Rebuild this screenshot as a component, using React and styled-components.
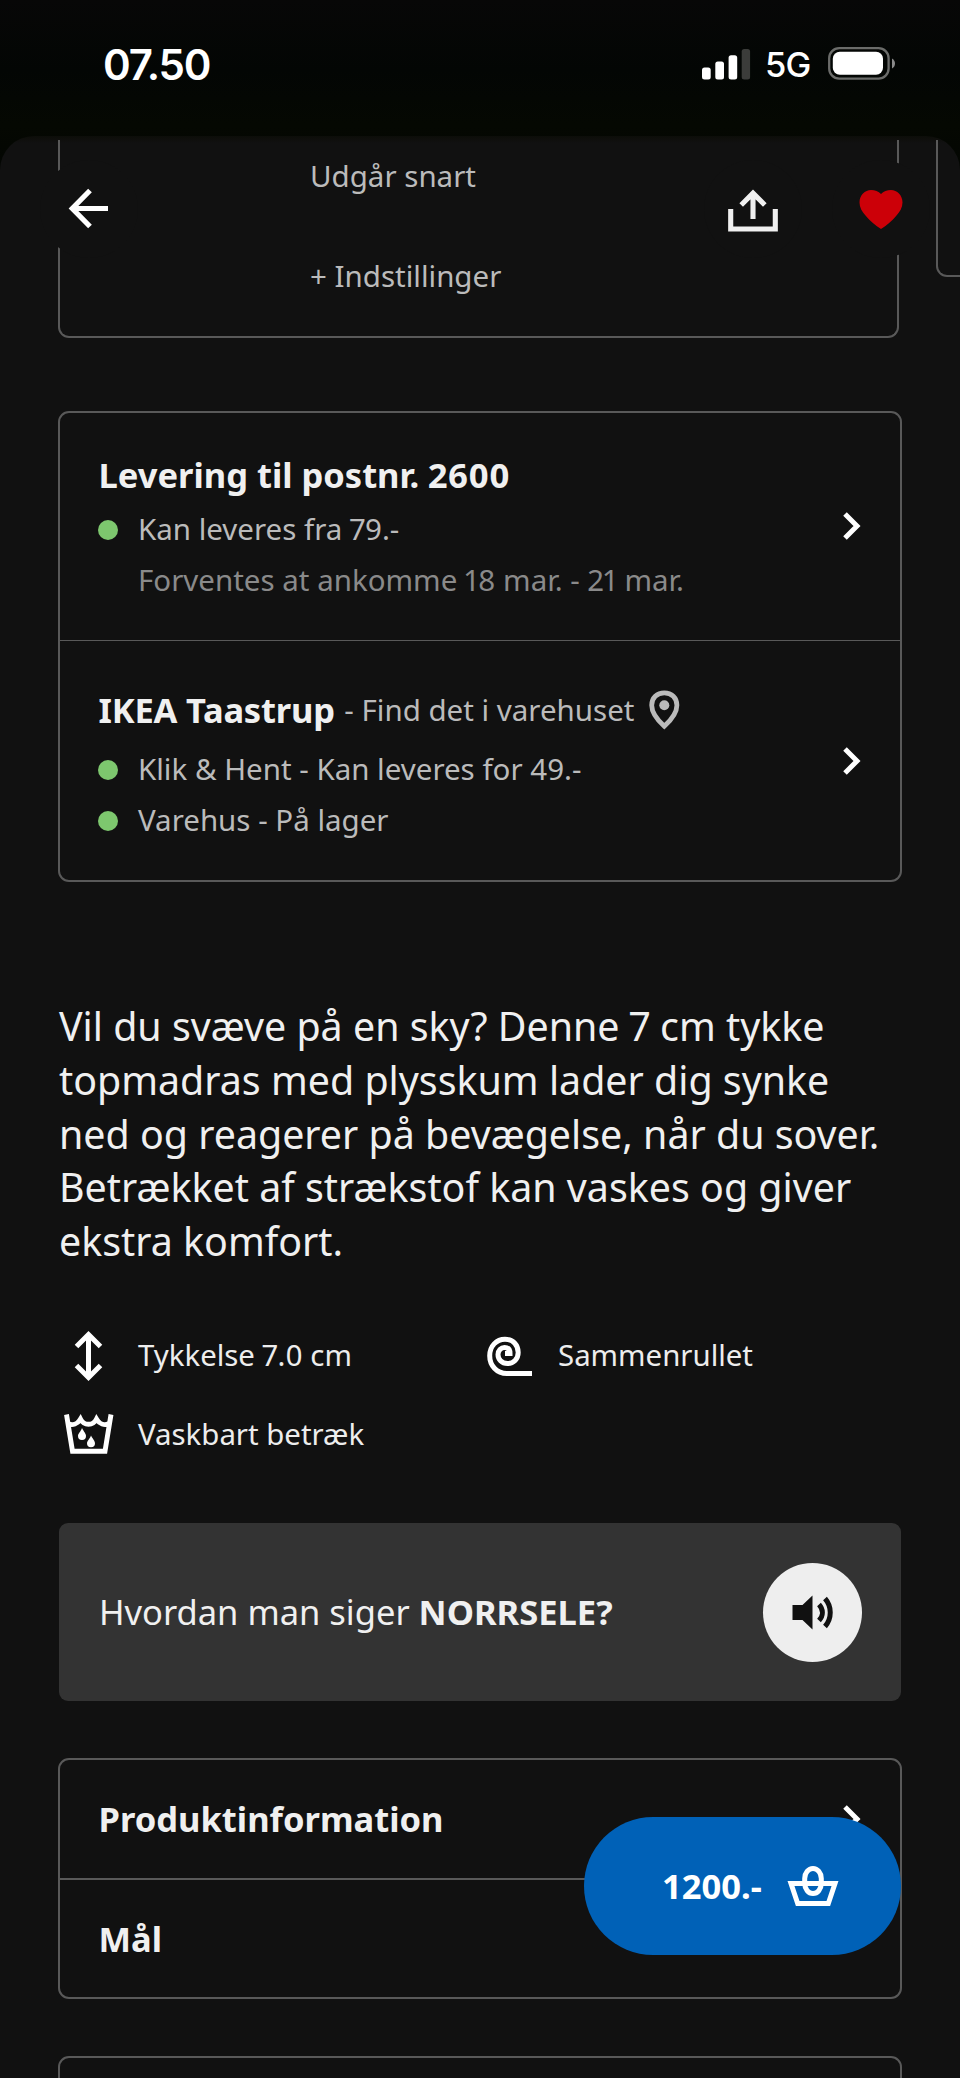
import styled, { createGlobalStyle, css } from "styled-components";

const GlobalStyle = createGlobalStyle`
  * {
    box-sizing: border-box;
  }
  body {
    margin: 0;
    background-color: #111111;
    font-family: "Noto Sans", sans-serif;
    font-variant-numeric: proportional-nums;
    color: #f0f0f0;
  }
  svg {
    display: block;
    flex-shrink: 0;
  }
`;

const Screen = styled.div`
  width: 960px;
  height: 2078px;
  overflow: hidden;
  position: relative;
  background: linear-gradient(#070707 0, #030604 70px, #050802 125px, #030602 170px);
`;

const StatusBar = styled.header`
  height: 136px;
  padding: 0 65px 7px 103px;
  display: flex;
  align-items: center;
  justify-content: space-between;
  font-family: Inter, sans-serif;
  color: #ffffff;
`;

const Clock = styled.span`
  font-size: 42px;
  font-weight: 600;
  letter-spacing: -1.1px;
`;

const StatusIcons = styled.div`
  display: flex;
  align-items: center;
  padding-bottom: 2px;
`;

const Network = styled.span`
  width: 77px;
  padding-left: 14px;
  font-size: 34.5px;
  font-weight: 500;
  letter-spacing: -0.8px;
  padding-top: 1px;
`;

const Sheet = styled.main`
  height: 1942px;
  border-radius: 34px 34px 0 0;
  overflow: hidden;
  background: linear-gradient(#0c0d09 0, #0f0f0c 3px, #111111 7px);
  padding-top: 4px;
`;

const RoundButton = styled.button`
  width: 98px;
  height: 98px;
  padding: 0;
  border: 0;
  border-radius: 50%;
  background-color: #111111;
  display: flex;
  align-items: center;
  justify-content: center;
`;

/* floats on top of the scrolled page */
const NavBar = styled.nav`
  position: absolute;
  top: 160px;
  left: 40px;
  right: 30px;
  display: flex;
  justify-content: space-between;
`;

const NavButton = styled(RoundButton)`
  padding: 0 1px 2px 0;
`;

const NavActions = styled.div`
  display: flex;
  gap: 30px;
`;

const Variants = styled.section`
  display: flex;
  align-items: flex-start;
  gap: 37px;
  padding-left: 58px;
`;

const VariantCard = styled.div`
  flex: none;
  width: 841px;
  height: ${({ $height }) => $height}px;
  border: 2px solid #595959;
  border-top: 0;
  border-radius: 0 0 11px 11px;
  padding: 14px 0 0 250px;
  display: flex;
  flex-direction: column;
  gap: 56px;
`;

const Body = styled.p`
  margin: 0;
  font-size: 29.5px;
  line-height: ${({ $line }) => $line || 51}px;
  color: ${({ $dim }) => ($dim ? "#8a8a8a" : "#bbbbbb")};
  white-space: nowrap;
`;

const Card = styled.section`
  width: 844px;
  margin: ${({ $top }) => $top}px 0 0 58px;
  border: 2px solid #595959;
  border-radius: 11px;
`;

const Row = styled.div`
  height: ${({ $height }) => $height}px;
  padding: ${({ $padTop }) => $padTop || 0}px 39px 0 38.5px;
  display: grid;
  grid-template-columns: 1fr 18px;
  ${({ $divider }) =>
    $divider &&
    css`
      border-bottom: ${$divider}px solid #595959;
    `}
`;

const ChevronBox = styled.div`
  margin-top: -${({ $padTop }) => $padTop || 0}px;
  display: flex;
  align-items: center;
`;

const RowTitle = styled.h2`
  margin: 0 0 ${({ $gap }) => $gap || 0}px;
  font-size: 34.5px;
  line-height: 47px;
  font-weight: 700;
  white-space: nowrap;
  display: flex;
  align-items: center;
`;

const StoreName = styled.span`
  letter-spacing: -0.2px;
`;

const StoreLink = styled.span`
  font-size: 29.5px;
  font-weight: 400;
  color: #bbbbbb;
  margin: 0 15px 0 9.5px;
`;

const Label = styled.div`
  align-self: center;
  padding-bottom: 1px;
  font-size: 34.5px;
  font-weight: 700;
`;

const StockLine = styled.div`
  display: flex;
  align-items: center;
  padding-left: ${({ $indent }) => ($indent ? 39.5 : 0)}px;
`;

const Dot = styled.span`
  width: 20px;
  height: 20px;
  margin: 2px 20px 0 -0.5px;
  border-radius: 50%;
  background-color: #7dc76e;
`;

const Description = styled.p`
  margin: 118px 58px 0 59px;
  font-size: 39.37px;
  line-height: 53.75px;
`;

const Features = styled.ul`
  list-style: none;
  margin: 47.25px 0 0 59px;
  padding: 0;
  display: grid;
  grid-template-columns: 420px 420px;
  grid-auto-rows: 78.5px;
`;

const Feature = styled.li`
  display: flex;
  align-items: center;
  gap: 20px;
  font-size: 29.4px;
  color: #ededed;
`;

const Pronounce = styled.section`
  width: 842px;
  height: 178px;
  margin: 50px 0 0 59px;
  padding: 0 39px 0 40px;
  border-radius: 9px;
  background-color: #333333;
  display: flex;
  align-items: center;
  justify-content: space-between;
  font-size: 34.5px;
`;

const Phrase = styled.span`
  padding-bottom: 2px;
`;

const PlayButton = styled(RoundButton)`
  width: 99px;
  height: 99px;
  background-color: #eeeeee;
`;

const BuyButton = styled.button`
  position: absolute;
  left: 584px;
  top: 1817px;
  width: 317px;
  height: 138px;
  border: 0;
  border-radius: 69px;
  padding: 0 62px 1px 78px;
  background-color: #0061b7;
  color: #ffffff;
  font-family: inherit;
  font-size: 34.5px;
  font-weight: 700;
  display: flex;
  align-items: center;
  justify-content: space-between;
`;

const Chevron = () => (
  <svg width="18" height="28" viewBox="0 0 18 28" fill="none" stroke="#fff" strokeWidth="5">
    <path d="M2 2 14 14 2 26" />
  </svg>
);

const SignalIcon = () => (
  <svg width="49" height="32" viewBox="0 0 49 32" fill="#fff">
    <rect x="0" y="19.5" width="8.7" height="12" rx="2.5" />
    <rect x="13.3" y="13.5" width="8.7" height="18" rx="2.5" />
    <rect x="26.6" y="7.3" width="8.6" height="24.2" rx="2.5" />
    <rect x="39.7" y="1" width="8.4" height="30.5" rx="2.5" fill="#3b3c3a" />
  </svg>
);

const BatteryIcon = () => (
  <svg width="67" height="33" viewBox="0 0 67 33">
    <rect x="1.2" y="1.2" width="59.4" height="30.4" rx="10" fill="none" stroke="#6b6c6a" strokeWidth="2.3" />
    <rect x="4.8" y="4.8" width="50.2" height="23" rx="7" fill="#fff" />
    <path d="M64 11.5c4 2 4 8 0 10z" fill="#8a8a8a" />
  </svg>
);

const BackIcon = () => (
  <svg width="59" height="59" viewBox="0 0 59 59" fill="none" stroke="#fff" strokeWidth="5.2">
    <path d="M49 29.5H14M31 11.5 13.3 29.5 31 47.5" />
  </svg>
);

const ShareIcon = () => (
  <svg width="59" height="59" viewBox="0 0 59 59" fill="none" stroke="#f0f0f0" strokeWidth="5.1">
    <path d="M7.7 30V50H52.3V30M30 40V15M18.2 26 30 14.2 41.8 26" />
  </svg>
);

const HeartIcon = () => (
  <svg width="59" height="59" viewBox="0 0 59 59" fill="#cc0008">
    <path d="M30 50C24.5 46.5 19 42 14.5 36.5C11 32.5 8.5 28.5 8.5 23.5C8.5 16 14 11 20 11C24 11 27.5 12.5 30 15C32.5 12.5 36 11 40 11C46 11 51.5 16 51.5 23.5C51.5 28.5 49 32.5 45.5 36.5C41 42 35.5 46.5 30 50Z" />
  </svg>
);

const PinIcon = () => (
  <svg width="31" height="40" viewBox="0 0 31 40">
    <path
      d="M15.3 36.3C9 30.5 2.7 23.5 2.7 15.2C2.7 7.8 8 2.8 15.3 2.8S27.9 7.8 27.9 15.2C27.9 23.5 21.6 30.5 15.3 36.3Z"
      fill="none"
      stroke="#bbb"
      strokeWidth="4.8"
    />
    <circle cx="15.3" cy="15.2" r="5" fill="#bbb" />
  </svg>
);

const ThicknessIcon = () => (
  <svg width="59" height="59" viewBox="0 0 59 59" fill="none" stroke="#fff" strokeWidth="5">
    <path d="M29.5 9V51M17.5 20.5 29.5 8.5 41.5 20.5M17.5 39.5 29.5 51.5 41.5 39.5" />
  </svg>
);

const RolledIcon = () => (
  <svg width="59" height="59" viewBox="0 0 59 59" fill="none" stroke="#fff" strokeWidth="5">
    <path d="M53 47.5H28C17.5 47.5 10.7 39.5 10.7 29.8C10.7 20 17.5 13.3 26 13.3C34.5 13.3 39.2 19.5 39.2 26.5C39.2 33 34.5 37.5 28.5 37.5C22.5 37.5 19 33 19 28.5C19 24.5 22 21.5 25.5 21.5C29 21.5 31 23.5 31 27.5H26" />
  </svg>
);

const WashIcon = () => (
  <svg width="59" height="59" viewBox="0 0 59 59">
    <path
      d="M7.5 10.5 13.5 47.2H46L52 10.5M9 19.5C13.5 22 18.5 20 21.5 15C25 22 34 22 37.5 15C40.5 20 45.5 22 50 19.5"
      fill="none"
      stroke="#fff"
      strokeWidth="4.9"
    />
    <path
      d="M23 24C25 28 27 29.5 27 32A4 4 0 0 1 19 32C19 29.5 21.5 28 23 24ZM32 31.5C34 35.5 36 37 36 39.2A4 4 0 0 1 28 39.2C28 37 30.5 35.5 32 31.5Z"
      fill="#fff"
    />
  </svg>
);

const SpeakerIcon = () => (
  <svg width="59" height="59" viewBox="0 0 59 59">
    <path d="M9.5 22H19.5L29.5 12.5V46.5L19.5 37H9.5Z" fill="#111" />
    <path
      d="M36 21.5C40.5 26.5 40.5 32.5 36 37.5M42 15.5C49 23.5 49 35.5 42 43.5"
      fill="none"
      stroke="#111"
      strokeWidth="5"
    />
  </svg>
);

const BasketIcon = () => (
  <svg width="52" height="42" viewBox="0 0 52 42" fill="none" stroke="#fff" strokeWidth="5">
    <path d="M4 18.5H48L41.3 38.5H10.7Z" />
    <rect x="17.7" y="3.5" width="16.6" height="25" rx="8.3" ry="10" />
  </svg>
);

export default function App() {
  return (
    <Screen>
      <GlobalStyle />
      <StatusBar>
        <Clock>07.50</Clock>
        <StatusIcons>
          <SignalIcon />
          <Network>5G</Network>
          <BatteryIcon />
        </StatusIcons>
      </StatusBar>

      <Sheet>
        <Variants>
          <VariantCard $height={198}>
            <Body $line={44}>Udgår snart</Body>
            <Body $line={44}>+ Indstillinger</Body>
          </VariantCard>
          <VariantCard $height={137} />
        </Variants>

        <Card $top={73}>
          <Row $height={228} $padTop={38} $divider={1}>
            <div>
              <RowTitle $gap={5}>Levering til postnr. 2600</RowTitle>
              <StockLine>
                <Dot />
                <Body>Kan leveres fra 79.-</Body>
              </StockLine>
              <StockLine $indent>
                <Body $dim>Forventes at ankomme 18 mar. - 21 mar.</Body>
              </StockLine>
            </div>
            <ChevronBox $padTop={39}>
              <Chevron />
            </ChevronBox>
          </Row>
          <Row $height={239} $padTop={45}>
            <div>
              <RowTitle $gap={10}>
                <StoreName>IKEA Taastrup</StoreName>
                <StoreLink>- Find det i varehuset</StoreLink>
                <PinIcon />
              </RowTitle>
              <StockLine>
                <Dot />
                <Body>Klik & Hent - Kan leveres for 49.-</Body>
              </StockLine>
              <StockLine>
                <Dot />
                <Body>Varehus - På lager</Body>
              </StockLine>
            </div>
            <ChevronBox $padTop={45}>
              <Chevron />
            </ChevronBox>
          </Row>
        </Card>

        <Description>
          Vil du svæve på en sky? Denne 7 cm tykke topmadras med plysskum lader
          dig synke ned og reagerer på bevægelse, når du sover. Betrækket af
          strækstof kan vaskes og giver ekstra komfort.
        </Description>

        <Features>
          <Feature>
            <ThicknessIcon />
            Tykkelse 7.0 cm
          </Feature>
          <Feature>
            <RolledIcon />
            Sammenrullet
          </Feature>
          <Feature>
            <WashIcon />
            Vaskbart betræk
          </Feature>
        </Features>

        <Pronounce>
          <Phrase>
            Hvordan man siger <b>NORRSELE?</b>
          </Phrase>
          <PlayButton>
            <SpeakerIcon />
          </PlayButton>
        </Pronounce>

        <Card $top={57}>
          <Row $height={120} $divider={2}>
            <Label>Produktinformation</Label>
            <ChevronBox>
              <Chevron />
            </ChevronBox>
          </Row>
          <Row $height={117}>
            <Label>Mål</Label>
            <ChevronBox>
              <Chevron />
            </ChevronBox>
          </Row>
        </Card>
        <Card $top={57}>
          <Row $height={119} />
        </Card>
      </Sheet>

      <NavBar>
        <NavButton>
          <BackIcon />
        </NavButton>
        <NavActions>
          <NavButton>
            <ShareIcon />
          </NavButton>
          <NavButton>
            <HeartIcon />
          </NavButton>
        </NavActions>
      </NavBar>

      <BuyButton>
        1200.-
        <BasketIcon />
      </BuyButton>
    </Screen>
  );
}
